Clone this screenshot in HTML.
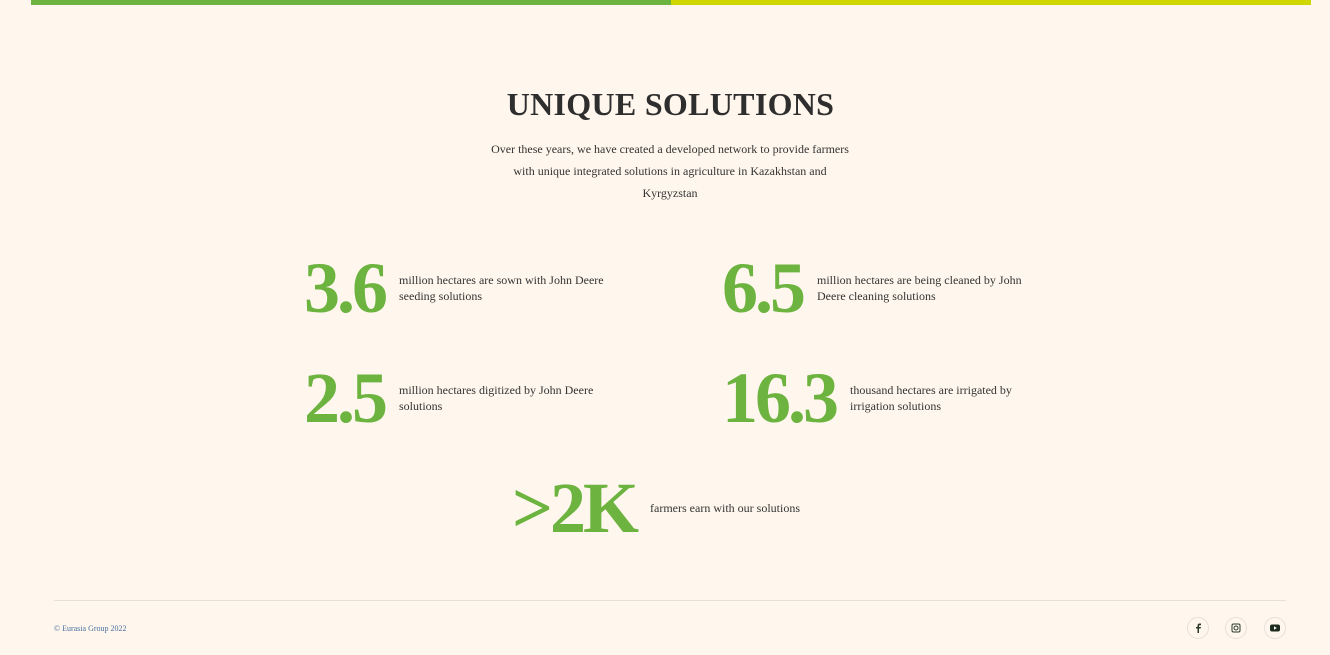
<!DOCTYPE html>
<html><head><meta charset="utf-8"><style>
*{margin:0;padding:0;box-sizing:border-box}
body{width:1330px;height:655px;background:#fff7ed;font-family:"Liberation Serif",serif;color:#333;position:relative;overflow:hidden}
.bar1{position:absolute;left:31px;top:0;width:640px;height:5px;background:#6cb33f}
.bar2{position:absolute;left:671px;top:0;width:640px;height:5px;background:#cfd600}
h1{position:absolute;left:0;width:1341px;top:86px;text-align:center;font-size:32px;font-weight:bold;letter-spacing:0.3px;color:#2e2e2e}
.sub{position:absolute;left:488px;width:364px;top:138px;text-align:center;font-size:12px;line-height:22px;color:#333}
.stat{position:absolute;display:flex;align-items:center}
.num{font-size:72px;font-weight:bold;color:#6cb33f;letter-spacing:-3px;line-height:72px}
.txt{font-size:12px;line-height:16px;margin-left:14px;color:#333}
.foot{position:absolute;left:54px;top:600px;width:1232px;border-top:1px solid #e5e0d8}
.copy{position:absolute;left:54px;top:624px;font-size:8px;color:#4a6fa0}
.ic{position:absolute;top:617px;width:22px;height:22px;border:1px solid #e8e0d8;border-radius:50%;display:flex;align-items:center;justify-content:center}
</style></head><body>
<div class="bar1"></div><div class="bar2"></div>
<h1>UNIQUE SOLUTIONS</h1>
<div class="sub">Over these years, we have created a developed network to provide farmers with unique integrated solutions in agriculture in Kazakhstan and Kyrgyzstan</div>
<div class="stat" style="left:304px;top:252px"><div class="num">3.6</div><div class="txt" style="width:220px">million hectares are sown with John Deere seeding solutions</div></div>
<div class="stat" style="left:722px;top:252px"><div class="num">6.5</div><div class="txt" style="width:220px">million hectares are being cleaned by John Deere cleaning solutions</div></div>
<div class="stat" style="left:304px;top:362px"><div class="num">2.5</div><div class="txt" style="width:220px">million hectares digitized by John Deere solutions</div></div>
<div class="stat" style="left:722px;top:362px"><div class="num">16.3</div><div class="txt" style="width:190px">thousand hectares are irrigated by irrigation solutions</div></div>
<div class="stat" style="left:512px;top:472px"><div class="num">&gt;2K</div><div class="txt" style="width:200px">farmers earn with our solutions</div></div>
<div class="foot"></div>
<div class="copy">© Eurasia Group 2022</div>
<div class="ic" style="left:1187px"><svg width="8" height="10" viewBox="0 0 8 10"><path d="M5 10V5.5h1.5L7 4H5V3c0-.5.2-.8.8-.8H7V.6C6.7.6 6.2.5 5.6.5 4.3.5 3.5 1.3 3.5 2.7V4H2v1.5h1.5V10z" fill="#2a3a2a"/></svg></div>
<div class="ic" style="left:1225px"><svg width="10" height="10" viewBox="0 0 10 10"><rect x="1" y="1" width="8" height="8" rx="1.5" fill="none" stroke="#2a3a2a" stroke-width="1"/><circle cx="5" cy="5" r="2" fill="none" stroke="#2a3a2a" stroke-width="1"/></svg></div>
<div class="ic" style="left:1264px"><svg width="10" height="8" viewBox="0 0 10 8"><rect x="0" y="0.5" width="10" height="7" rx="2" fill="#1e2a1e"/><path d="M4 2.3v3.4L6.8 4z" fill="#fff"/></svg></div>
</body></html>
